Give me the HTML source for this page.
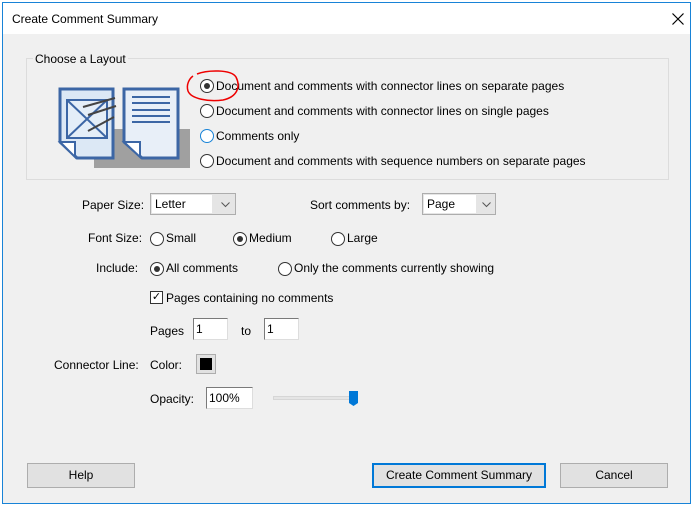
<!DOCTYPE html>
<html><head><style>
*{margin:0;padding:0;box-sizing:border-box}
body{width:693px;height:508px;background:#fff;position:relative;overflow:hidden;font-family:"Liberation Sans",sans-serif;font-size:12px;color:#000}
.win{position:absolute;left:2px;top:2px;width:689px;height:502px;border:1px solid #1883d7;background:#f0f0f0}
.title{position:absolute;left:0;top:0;width:100%;height:31px;background:#fff}
.a{position:absolute;white-space:nowrap}
.rad{position:absolute;width:14px;height:14px;border:1px solid #333;border-radius:50%;background:#fff}
.rad.on::after{content:"";position:absolute;left:3px;top:3px;width:6px;height:6px;border-radius:50%;background:#333}
.btn{position:absolute;height:25px;border:1px solid #adadad;background:#e1e1e1;text-align:center;line-height:23px}
.inp{position:absolute;background:#fff;border:1px solid #7a7a7a;border-right-color:#ddd;border-bottom-color:#ddd;height:22px;padding:2px 2px;line-height:16px}
.sel{position:absolute;height:22px;border:1px solid #adadad;background:#e5e5e5}
.sel .v{position:absolute;left:1px;top:1px;bottom:1px;width:60px;background:#fff;padding:2px 3px}
</style></head><body>
<div class="win">
<div class="title"></div>
<div class="a" style="left:9px;top:9px">Create Comment Summary</div>
<svg class="a" style="left:669px;top:10px" width="12" height="12"><path d="M0.5 0.5L11.5 11.5M11.5 0.5L0.5 11.5" stroke="#000" stroke-width="1.2"/></svg>
<div class="a" style="left:23px;top:55px;width:643px;height:122px;border:1px solid #dcdcdc"></div>
<div class="a" style="left:30px;top:49px;background:#f0f0f0;padding:0 2px">Choose a Layout</div>
<svg class="a" style="left:53px;top:82px" width="140" height="85">
<rect x="38" y="44" width="96" height="39" fill="#a0a0a0"/>
<path d="M4 4H57V73H21L4 57Z" fill="#dce8f5" stroke="#3c66a5" stroke-width="3"/>
<rect x="11" y="15" width="40" height="38" fill="#e4eef8" stroke="#3c66a5" stroke-width="2"/>
<path d="M11 15L51 53M51 15L11 53" stroke="#3c66a5" stroke-width="2"/>
<path d="M4 57H19V72Z" fill="#fff" stroke="#3c66a5" stroke-width="2"/>
<path d="M27 22L59 13M32 30L60 21M32 46L58 32" stroke="#444" stroke-width="2"/>
<path d="M68 4H122V73H86L68 57Z" fill="#e8eff8" stroke="#3c66a5" stroke-width="3"/>
<path d="M76 12H114M76 18H114M76 25H114M76 31H114M76 37H114" stroke="#3c66a5" stroke-width="2"/>
<path d="M68 57H84V72Z" fill="#fff" stroke="#3c66a5" stroke-width="2"/>
</svg>
<div class="rad on" style="left:197px;top:76px"></div><div class="a" style="left:213px;top:76px">Document and comments with connector lines on separate pages</div>
<svg class="a" style="left:180px;top:66px" width="62" height="36"><path d="M14 5C24 1 48 0 53 8C58 18 54 28 40 31C26 33 8 30 5 22C3 16 6 10 10 7" fill="none" stroke="#e00" stroke-width="1.5"/></svg>
<div class="rad" style="left:197px;top:101px"></div><div class="a" style="left:213px;top:101px">Document and comments with connector lines on single pages</div>
<div class="rad" style="left:197px;top:126px;border-color:#1883d7"></div><div class="a" style="left:213px;top:126px">Comments only</div>
<div class="rad" style="left:197px;top:151px"></div><div class="a" style="left:213px;top:151px">Document and comments with sequence numbers on separate pages</div>

<div class="a" style="left:79px;top:195px">Paper Size:</div>
<div class="sel" style="left:147px;top:190px;width:86px"><div class="v">Letter</div><svg class="a" style="left:70px;top:8px" width="9" height="6"><path d="M0.5 0.5L4.5 4.5L8.5 0.5" fill="none" stroke="#555"/></svg></div>
<div class="a" style="left:307px;top:195px">Sort comments by:</div>
<div class="sel" style="left:419px;top:190px;width:74px"><div class="v" style="width:52px">Page</div><svg class="a" style="left:59px;top:8px" width="9" height="6"><path d="M0.5 0.5L4.5 4.5L8.5 0.5" fill="none" stroke="#555"/></svg></div>

<div class="a" style="left:85px;top:228px">Font Size:</div>
<div class="rad" style="left:147px;top:229px"></div><div class="a" style="left:163px;top:228px">Small</div>
<div class="rad on" style="left:230px;top:229px"></div><div class="a" style="left:246px;top:228px">Medium</div>
<div class="rad" style="left:328px;top:229px"></div><div class="a" style="left:344px;top:228px">Large</div>

<div class="a" style="left:93px;top:258px">Include:</div>
<div class="rad on" style="left:147px;top:259px"></div><div class="a" style="left:163px;top:258px">All comments</div>
<div class="rad" style="left:275px;top:259px"></div><div class="a" style="left:291px;top:258px">Only the comments currently showing</div>

<div class="a" style="left:147px;top:288px;width:13px;height:13px;border:1px solid #333;background:#fff;font-size:11px;line-height:11px;text-align:center">✓</div>
<div class="a" style="left:163px;top:288px">Pages containing no comments</div>

<div class="a" style="left:147px;top:321px">Pages</div>
<div class="inp" style="left:190px;top:315px;width:35px">1</div>
<div class="a" style="left:238px;top:321px">to</div>
<div class="inp" style="left:261px;top:315px;width:35px">1</div>

<div class="a" style="left:51px;top:355px">Connector Line:</div>
<div class="a" style="left:147px;top:355px">Color:</div>
<div class="a" style="left:193px;top:351px;width:20px;height:20px;border:1px solid #adadad;background:#e1e1e1"><div style="margin:3px;width:12px;height:12px;background:#000"></div></div>

<div class="a" style="left:147px;top:389px">Opacity:</div>
<div class="inp" style="left:203px;top:384px;width:47px">100%</div>
<div class="a" style="left:270px;top:393px;width:85px;height:4px;background:#e5e5e5;border:1px solid #d6d6d6"></div>
<svg class="a" style="left:346px;top:388px" width="10" height="16"><path d="M0 0H9V12L4.5 15L0 12Z" fill="#0078d7"/></svg>

<div class="btn" style="left:24px;top:460px;width:108px">Help</div>
<div class="btn" style="left:369px;top:460px;width:174px;border:2px solid #0078d7;line-height:21px">Create Comment Summary</div>
<div class="btn" style="left:557px;top:460px;width:108px">Cancel</div>
</div>
</body></html>
